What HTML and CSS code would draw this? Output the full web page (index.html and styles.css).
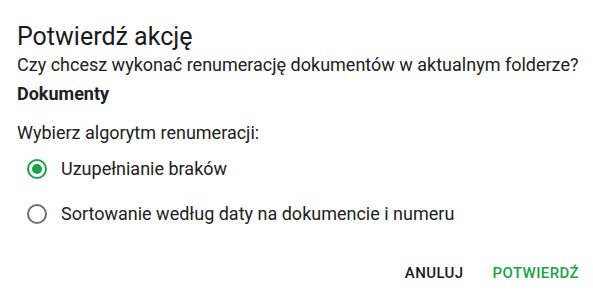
FILE: index.html
```html
<!DOCTYPE html>
<html lang="pl">
<head>
<meta charset="utf-8">
<link rel="stylesheet" href="styles.css">
</head>
<body>
<div class="dialog">
  <h2 class="title">Potwierdź akcję</h2>
  <p class="question">Czy chcesz wykonać renumerację dokumentów w aktualnym folderze?</p>
  <p class="folder">Dokumenty</p>
  <p class="label">Wybierz algorytm renumeracji:</p>
  <div class="options">
    <label class="option">
      <span class="radio checked"><span class="dot"></span></span>
      <span class="option-text">Uzupełnianie braków</span>
    </label>
    <label class="option">
      <span class="radio"></span>
      <span class="option-text">Sortowanie według daty na dokumencie i numeru</span>
    </label>
  </div>
  <div class="actions">
    <button class="btn cancel">ANULUJ</button>
    <button class="btn confirm">POTWIERDŹ</button>
  </div>
</div>
</body>
</html>
```
FILE: styles.css
```css
html, body {
  margin: 0;
  padding: 0;
  background: #fff;
}
body {
  font-family: Roboto, "Liberation Sans", sans-serif;
  color: #212121;
}
.dialog {
  width: 593px;
  height: 298px;
  box-sizing: border-box;
  padding: 23px 0 0 17px;
  display: flex;
  flex-direction: column;
}
.title {
  margin: 0;
  font-size: 25px;
  font-weight: 400;
  line-height: 28px;
  color: #1a1a1a;
}
.question {
  margin: 2px 0 0;
  font-size: 18px;
  line-height: 24px;
}
.folder {
  margin: 5px 0 0;
  font-size: 18px;
  font-weight: 700;
  line-height: 24px;
}
.label {
  margin: 15px 0 0;
  font-size: 18px;
  line-height: 24px;
}
.options {
  display: flex;
  flex-direction: column;
  margin-top: 1px;
  padding-left: 10px;
}
.option {
  display: flex;
  align-items: center;
  height: 45px;
  gap: 14px;
  font-size: 18px;
}
.radio {
  width: 20px;
  height: 20px;
  box-sizing: border-box;
  border: 2px solid #6e6e6e;
  border-radius: 50%;
  display: flex;
  align-items: center;
  justify-content: center;
}
.radio.checked {
  border-color: #1ba24a;
}
.dot {
  width: 10px;
  height: 10px;
  border-radius: 50%;
  background: #1ba24a;
}
.actions {
  display: flex;
  justify-content: flex-end;
  gap: 29px;
  margin-top: auto;
  margin-bottom: 7px;
  padding-right: 14px;
}
.btn {
  font-family: Roboto, "Liberation Sans", sans-serif;
  font-size: 15px;
  font-weight: 500;
  letter-spacing: 0.4px;
  background: none;
  border: none;
  padding: 0;
  height: 36px;
  line-height: 36px;
}
.cancel {
  color: #1a1a1a;
}
.confirm {
  color: #1ba24a;
}
```
